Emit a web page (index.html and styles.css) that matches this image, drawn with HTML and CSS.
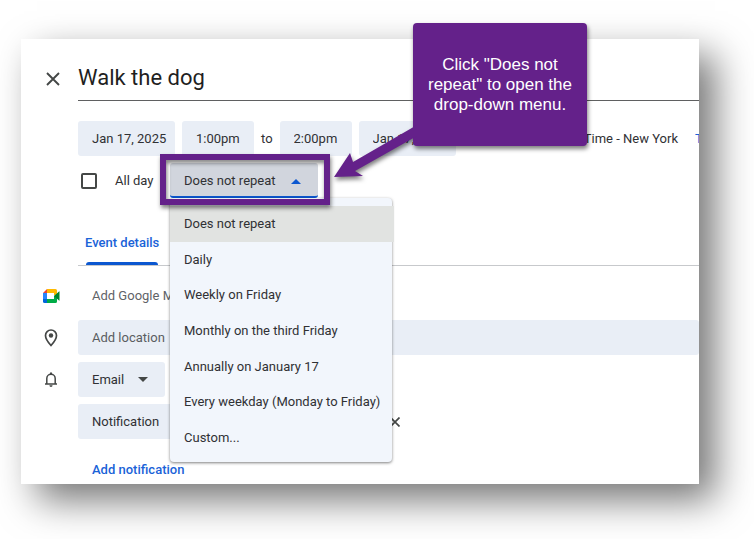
FILE: index.html
```html
<!DOCTYPE html>
<html lang="en">
<head>
<meta charset="utf-8">
<meta name="viewport" content="width=device-width, initial-scale=1">
<title>Walk the dog</title>
<link rel="stylesheet" href="styles.css">
</head>
<body>
<main class="card">
  <header class="row title-row">
    <div class="gutter">
      <button class="icon-button" type="button" aria-label="Close">
        <svg width="14" height="14" viewBox="0 0 14 14"><path d="M1 1l12 12M13 1L1 13" fill="none" stroke="#444746" stroke-width="1.9"/></svg>
      </button>
    </div>
    <input class="title" type="text" value="Walk the dog" aria-label="Title">
  </header>

  <div class="row times">
    <div class="gutter"></div>
    <div class="time-fields">
      <input class="field date" type="text" value="Jan 17, 2025" aria-label="Start date">
      <input class="field time" type="text" value="1:00pm" aria-label="Start time">
      <span>to</span>
      <input class="field time" type="text" value="2:00pm" aria-label="End time">
      <input class="field date" type="text" value="Jan 17, 2025" aria-label="End date">
      <div class="zone"><span>Time - New York</span><a class="zone-link" href="#">T</a></div>
    </div>
  </div>

  <div class="row options">
    <div class="gutter"></div>
    <label class="all-day"><input class="check" type="checkbox">All day</label>
    <div class="repeat">
      <select class="field repeat-select" aria-label="Repeat"><option>Does not repeat</option></select>
      <svg class="caret-up" width="10" height="5" viewBox="0 0 10 5"><path d="M0 5L5 0l5 5z" fill="#0b57d0"/></svg>
      <ul class="menu" role="listbox" aria-label="Repeat options">
        <li class="selected" role="option" aria-selected="true">Does not repeat</li>
        <li role="option">Daily</li>
        <li role="option">Weekly on Friday</li>
        <li role="option">Monthly on the third Friday</li>
        <li role="option">Annually on January 17</li>
        <li role="option">Every weekday (Monday to Friday)</li>
        <li role="option">Custom...</li>
      </ul>
      <div class="highlight"></div>
    </div>
  </div>

  <div class="row tabs-row">
    <div class="gutter"></div>
    <nav class="tabs"><a class="tab" href="#">Event details</a></nav>
  </div>

  <section class="details">
    <div class="row">
      <div class="gutter">
        <svg width="17" height="14" viewBox="0 0 17 14">
          <path d="M4 0v4H0z" fill="#ea4335"/>
          <path d="M4 0h8.500q1.500 0 1.500 1.500V7l-3-1V4H4z" fill="#ffba00"/>
          <path d="M0 4h4v6H0z" fill="#2684fc"/>
          <path d="M0 10h4v4H1.500Q0 14 0 12.500z" fill="#0066da"/>
          <path d="M4 10h7V7l3-2v7.500q0 1.500-1.500 1.500H4z" fill="#00ac47"/>
          <path d="M11 7l5-4.500Q16.500 2 16.500 3v8q0 1-.5.500z" fill="#00832d"/>
        </svg>
      </div>
      <button class="meet" type="button">Add Google Meet</button>
    </div>
    <div class="row">
      <div class="gutter">
        <svg width="14" height="18" viewBox="0 0 14 18"><path d="M7 1a5.500 5.500 0 0 0-5.500 5.500C1.500 10.500 7 16.500 7 16.500s5.500-6 5.500-10A5.500 5.500 0 0 0 7 1z" fill="none" stroke="#444746" stroke-width="1.700"/><circle cx="7" cy="6.500" r="2.200" fill="#444746"/></svg>
      </div>
      <input class="field location" type="text" placeholder="Add location" aria-label="Add location">
    </div>
    <div class="row">
      <div class="gutter">
        <svg width="14" height="16" viewBox="0 0 14 16"><path d="M1 12h12M2.800 12V6.500a4.200 4.200 0 0 1 8.400 0V12" fill="none" stroke="#444746" stroke-width="1.500"/><path d="M6 .5h2v2H6zM5.400 13.300h3.200a1.600 1.600 0 0 1-3.200 0z" fill="#444746"/></svg>
      </div>
      <div class="email">
        <select class="field email-select" aria-label="Reminder type"><option>Email</option></select>
        <svg class="caret-down" width="10" height="5" viewBox="0 0 10 5"><path d="M0 0h10L5 5z" fill="#444746"/></svg>
      </div>
    </div>
    <div class="row">
      <div class="gutter"></div>
      <select class="field notification" aria-label="Second reminder type"><option>Notification</option></select>
      <button class="icon-button remove" type="button" aria-label="Remove notification">
        <svg width="10" height="10" viewBox="0 0 10 10"><path d="M0.500 0.500l9 9M9.500 0.500l-9 9" fill="none" stroke="#444746" stroke-width="1.700"/></svg>
      </button>
    </div>
  </section>
  <div class="row add-row">
    <div class="gutter"></div>
    <button class="add" type="button">Add notification</button>
  </div>
</main>

<aside class="callout">
  <svg class="arrow" width="90" height="60" viewBox="0 0 90 60"><path d="M1 54L17 30l3 9L84 2v11L22 48l8 5z" fill="#64218a"/></svg>
  <p>Click "Does not repeat" to open the drop-down menu.</p>
</aside>
</body>
</html>
```
FILE: styles.css
```css
* { box-sizing: border-box; }

body {
  margin: 0;
  min-height: 100vh;
  padding: 39px 55px 55px 21px;
  position: relative;
  display: flex;
  background: #fff;
  color: #303134;
  font: 13px/20px Roboto, "Liberation Sans", sans-serif;
}

input, select, button { font: inherit; color: inherit; }
button { border: 0; padding: 0; background: none; }
svg { display: block; }
a { color: #1a63d8; text-decoration: none; }

.card {
  flex: 1;
  min-width: 0;
  background: #fff;
  box-shadow: 16px 16px 36px rgba(0, 0, 0, 0.54);
}

.row { display: flex; align-items: center; }
.gutter {
  flex: 0 0 57px;
  display: flex;
  justify-content: center;
  padding-left: 3px;
}

.title-row .gutter { padding: 18px 0 0 7px; }
.title {
  flex: 1;
  min-width: 0;
  height: 62px;
  padding: 16px 0 0;
  border: 0;
  border-bottom: 1px solid #5f6061;
  background: none;
  color: #1f1f1f;
  font-size: 22px;
}

.field {
  height: 35px;
  padding: 0 14px;
  border: 0;
  border-radius: 3px;
  background: #e9eef6;
  appearance: none;
}

.times { margin-top: 20px; }
.time-fields {
  flex: 1;
  min-width: 0;
  display: flex;
  align-items: center;
  gap: 7px;
}
.date, .time { flex: none; padding-right: 0; }
.date { width: 97px; }
.time { width: 72px; }
.zone {
  flex: 1;
  min-width: 0;
  display: flex;
  justify-content: flex-end;
  gap: 17px;
  overflow: hidden;
  white-space: nowrap;
}
.zone-link { flex: 0 0 4px; overflow: hidden; }

.options { margin-top: 7px; }
.all-day {
  flex: 0 0 92px;
  display: flex;
  align-items: center;
  gap: 18px;
  padding-left: 3px;
}
.check {
  width: 16px;
  height: 16px;
  margin: 0;
  border: 2px solid #444746;
  border-radius: 2px;
  appearance: none;
}
.repeat { position: relative; flex: 0 0 148px; }
.repeat-select {
  display: block;
  width: 100%;
  padding-top: 2px;
  border-bottom: 2px solid #0b57d0;
  background: #d1d5dd;
}
.caret-up { position: absolute; right: 17px; top: 16px; }

.menu {
  position: absolute;
  top: 100%;
  left: 0;
  width: 222px;
  min-height: 264px;
  margin: 0;
  padding: 8px 0 6px;
  display: grid;
  list-style: none;
  white-space: nowrap;
  border-radius: 4px;
  background: #f2f6fc;
  box-shadow: 0 1px 3px rgba(0, 0, 0, 0.5);
}
.menu li { display: flex; align-items: center; padding: 0 14px; }
.menu .selected { background: #e1e3e1; }

.highlight {
  position: absolute;
  inset: -9px -12px -7px -10px;
  border: 6px solid #64218a;
  filter: drop-shadow(1px 3px 2px rgba(0, 0, 0, 0.5));
  pointer-events: none;
}

.tabs {
  flex: 1;
  height: 68px;
  display: flex;
  align-items: flex-end;
  padding-left: 7px;
  border-bottom: 1px solid #c7c9cc;
}
.tab {
  position: relative;
  padding-bottom: 12px;
  font-weight: 500;
}
.tab::after {
  content: "";
  position: absolute;
  inset: auto 1px 0 1px;
  height: 3px;
  border-radius: 3px 3px 0 0;
  background: #0b57d0;
}

.details { display: grid; gap: 7px; padding-top: 12px; }
.meet { height: 35px; padding: 0 14px; color: #5f6368; }
.location { flex: 1; min-width: 0; }
.location::placeholder { color: #5a5d61; opacity: 1; }
.email { position: relative; }
.email-select { display: block; width: 87px; }
.caret-down { position: absolute; right: 17px; top: 15px; }
.notification { flex: 0 0 305px; }
.remove { margin-left: 7px; }
.add-row { padding-top: 17px; }
.add { height: 28px; padding: 0 14px; color: #1a63d8; font-weight: 500; }

.callout {
  position: absolute;
  top: 23px;
  left: 413px;
  width: 174px;
  min-height: 123px;
  padding: 0 12px;
  display: flex;
  align-items: center;
  border-radius: 4px;
  background: #64218a;
  color: #fff;
  font: 17px/20px "Liberation Sans", sans-serif;
  text-align: center;
  filter: drop-shadow(1px 3px 2px rgba(0, 0, 0, 0.5));
}
.callout p { margin: 0; }
.arrow { position: absolute; left: -80px; top: 100px; }
```
